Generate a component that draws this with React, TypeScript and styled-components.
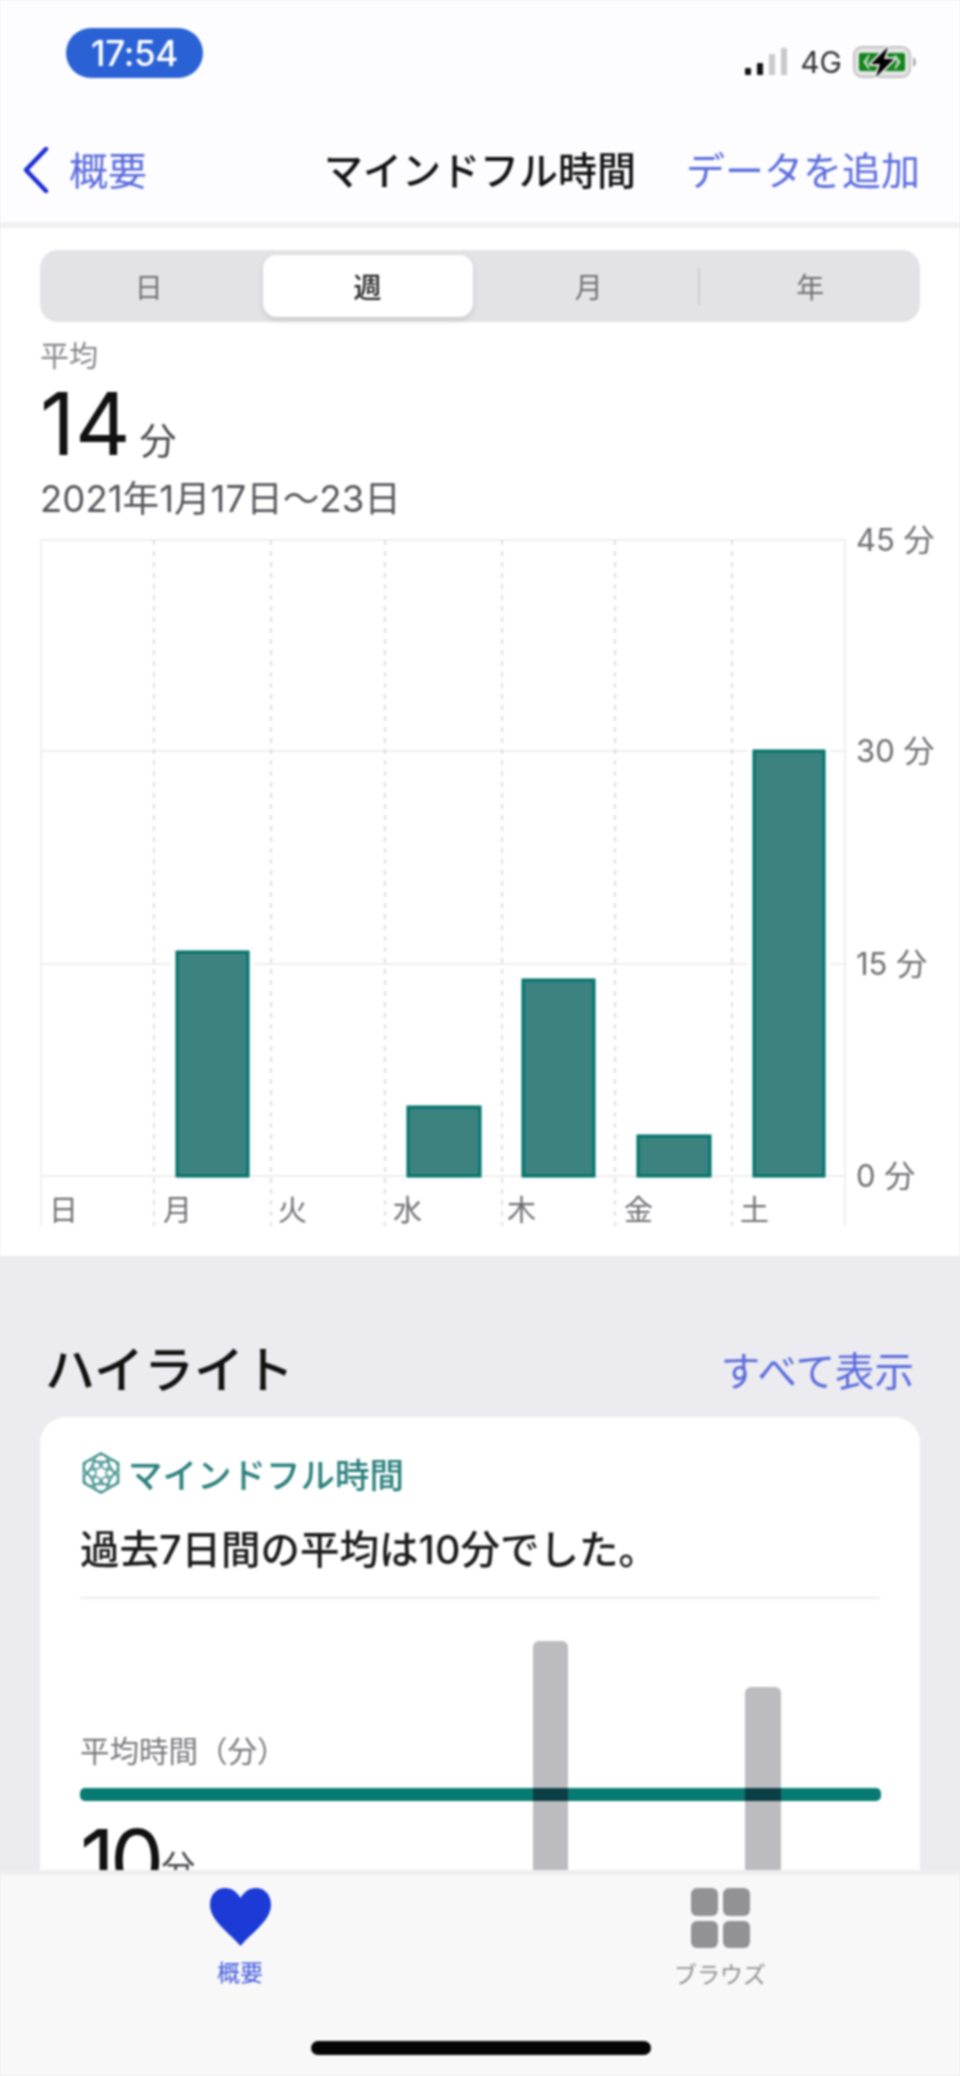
import React from "react";
import styled, { createGlobalStyle } from "styled-components";

const Global = createGlobalStyle`
  html, body { margin: 0; padding: 0; background: #ebebf0; }
  * { box-sizing: border-box; }
  body { font-family: Inter, "Noto Sans CJK JP", sans-serif; }
`;

const Page = styled.div`
  position: relative;
  width: 960px;
  height: 2076px;
  overflow: hidden;
  background: #ebebf0;
  filter: blur(0.9px);
  color: #111;
`;
const Header = styled.header`
  height: 228px;
  padding-top: 28px;
  background: #fdfdff;
  border-bottom: 6px solid #f1f1f3;
`;
const StatusRow = styled.div`
  display: flex;
  justify-content: space-between;
  padding: 0 43px 0 66px;
  height: 50px;
`;
const TimePill = styled.div`
  width: 137px;
  height: 50px;
  border-radius: 25px;
  background: #2a62d6;
  color: #fff;
  font-size: 35px;
  font-weight: 500;
  letter-spacing: -0.3px;
  display: flex;
  align-items: center;
  justify-content: center;
`;
const StatusRight = styled.div`
  display: flex;
  align-items: center;
  padding-top: 17px;
  gap: 12px;
`;
const NetLabel = styled.span`
  font-size: 30px;
  color: #333;
  margin-right: -1px;
`;
const NavBar = styled.nav`
  margin-top: 46px;
  height: 92px;
  display: grid;
  grid-template-columns: 1fr auto 1fr;
  align-items: center;
  padding: 0 40px 0 23px;
`;
const Back = styled.div`
  display: flex;
  align-items: center;
  gap: 20px;
`;
const Link = styled.span<{ $size?: number }>`
  font-size: ${(p) => p.$size ?? 39}px;
  color: #5a6bdc;
  line-height: 1;
`;
const NavTitle = styled.h1`
  margin: 0 0 0 17px;
  font-size: 39px;
  font-weight: 500;
  color: #111;
  line-height: 1;
  white-space: nowrap;
`;
const NavRight = styled.div`
  display: flex;
  justify-content: flex-end;
`;
const Main = styled.main`
  background: #fff;
  height: 1028px;
  padding-top: 22px;
`;
const Segmented = styled.div`
  margin: 0 40px;
  height: 72px;
  padding: 5px;
  border-radius: 18px;
  background: #e3e3e6;
  display: grid;
  grid-template-columns: repeat(4, 1fr);
`;
const Segment = styled.div<{ $active?: boolean; $left?: number; $right?: number }>`
  position: relative;
  display: flex;
  align-items: center;
  justify-content: center;
  width: ${(p) => (p.$active ? "210px" : "auto")};
  padding: 0 ${(p) => p.$right ?? 0}px 0 ${(p) => p.$left ?? 0}px;
  border-radius: 14px;
  font-size: 28px;
  font-weight: ${(p) => (p.$active ? 500 : 400)};
  color: ${(p) => (p.$active ? "#222" : "#6f6f73")};
  background: ${(p) => (p.$active ? "#fff" : "transparent")};
  box-shadow: ${(p) => (p.$active ? "0 3px 6px rgba(0,0,0,.12)" : "none")};
`;
const RuleCell = styled(Segment)`
  &::before {
    content: "";
    position: absolute;
    left: 0;
    top: 13px;
    bottom: 12px;
    width: 2px;
    background: #cfcfd3;
  }
`;
const Summary = styled.section`
  padding: 19px 40px 0;
`;
const SumLabel = styled.div`
  font-size: 29px;
  line-height: 32px;
  color: #85858a;
`;
const BigRow = styled.div<{ $top?: number }>`
  display: flex;
  align-items: baseline;
  gap: 9px;
  margin-top: ${(p) => p.$top ?? 0}px;
  height: 92px;
`;
const BigNum = styled.span`
  font-size: 86px;
  line-height: 92px;
  font-weight: 400;
  color: #111;
`;
const BigUnit = styled.span`
  font-size: 37px;
  color: #48484c;
`;
const DateText = styled.div`
  margin-top: 9px;
  font-size: 36.6px;
  line-height: 40px;
  color: #55555a;
  white-space: nowrap;
`;
const ChartSvg = styled.svg`
  display: block;
  width: 960px;
  height: 715px;
  margin: -4px 0 0 -40px;
  text {
    font-family: Inter, "Noto Sans CJK JP", sans-serif;
    fill: #6e6e72;
  }
`;
const HighlightHead = styled.div`
  display: flex;
  justify-content: space-between;
  align-items: flex-end;
  height: 60px;
  margin-top: 84px;
  padding: 0 46px 0 45px;
`;
const HighlightTitle = styled.h2`
  margin: 0;
  font-size: 50px;
  font-weight: 500;
  line-height: 60px;
`;
const ShowAll = styled(Link)`
  font-size: 39.5px;
  line-height: 56px;
`;
const Card = styled.article`
  position: relative;
  margin: 17px 40px 0;
  height: 600px;
  padding: 36px 40px;
  background: #fff;
  border-radius: 26px;
`;
const CardHead = styled.div`
  display: flex;
  align-items: center;
  gap: 6px;
  height: 40px;
  font-size: 34.5px;
  font-weight: 500;
  color: #2b807c;
`;
const Message = styled.p`
  margin: 32px 0 0;
  font-size: 39.5px;
  line-height: 50px;
  font-weight: 500;
  color: #1a1a1a;
  white-space: nowrap;
`;
const Rule = styled.hr`
  margin: 22px 0 0;
  border: 0;
  height: 2px;
  background: #ececef;
`;
const MetricLabel = styled.div`
  margin-top: 132px;
  font-size: 29.5px;
  line-height: 40px;
  color: #77777b;
  white-space: nowrap;
`;
const MiniRow = styled(BigRow)`
  margin-top: 44px;
  gap: 2px;
`;
const MiniNum = styled(BigNum)`
  letter-spacing: -5px;
`;
const MiniUnit = styled(BigUnit)`
  font-size: 34px;
  transform: translateY(-12px);
`;
const MiniChart = styled.svg`
  position: absolute;
  left: 0;
  top: 0;
  width: 880px;
  height: 600px;
`;
const TabBar = styled.footer`
  position: absolute;
  left: 0;
  right: 0;
  bottom: 0;
  height: 206px;
  background: #f8f8f8;
  border-top: 5px solid #eeeeef;
`;
const Tabs = styled.div`
  display: grid;
  grid-template-columns: 1fr 1fr;
  padding-top: 13px;
`;
const Tab = styled.div<{ $active?: boolean }>`
  display: flex;
  flex-direction: column;
  align-items: center;
  font-size: 23px;
  line-height: 30px;
  color: ${(p) => (p.$active ? "#4158dc" : "#8f8f92")};
`;
const TabLabel = styled.span`
  margin-top: 12px;
`;
const BrowseGrid = styled.div`
  width: 59px;
  height: 60px;
  display: grid;
  grid-template-columns: 1fr 1fr;
  grid-template-rows: 1fr 1fr;
  gap: 5px;
`;
const BrowseCell = styled.span`
  background: #929294;
  border-radius: 6px;
`;
const HomeBar = styled.div`
  width: 340px;
  height: 14px;
  margin: 51px auto 0 311px;
  border-radius: 7px;
  background: #050505;
`;

const Signal = () => (
  <svg width="44" height="28" viewBox="0 0 44 28">
    <rect x="1" y="20" width="6" height="7" rx="1" fill="#111" />
    <rect x="13" y="15" width="6" height="12" rx="1" fill="#111" />
    <rect x="25" y="6" width="6" height="21" rx="1" fill="#c9c9cb" />
    <rect x="37" y="0" width="6" height="27" rx="1" fill="#c9c9cb" />
  </svg>
);

const Battery = () => (
  <svg width="64" height="32" viewBox="0 0 64 32">
    <rect x="1" y="1" width="56" height="30" rx="8" fill="#e3e3e3" stroke="#c2c2c2" strokeWidth="2" />
    <path d="M60 11c2 1 3 3 3 5s-1 4-3 5z" fill="#a9a9a9" />
    <rect x="6" y="7" width="46" height="18" rx="2" fill="#0f8418" />
    <path d="M15 9 L10 16 L15 23 H17 L14 16 L17 9 Z" fill="#e3e3e3" opacity=".8" />
    <path d="M43 9 L48 16 L43 23 H41 L44 16 L41 9 Z" fill="#e3e3e3" opacity=".8" />
    <path d="M35 1 L18 18 H27 L23 31 L41 13 H31 Z" fill="#000" stroke="#e3e3e3" strokeWidth="4" paintOrder="stroke" strokeLinejoin="round" />
  </svg>
);

const Chevron = () => (
  <svg width="26" height="46" viewBox="0 0 26 46">
    <path d="M23 2 L3 23 L23 44" fill="none" stroke="#1f2fd4" strokeWidth="4.5" strokeLinecap="round" strokeLinejoin="round" />
  </svg>
);

const Mindful = () => (
  <svg width="42" height="42" viewBox="0 0 42 42">
    <g fill="none" stroke="#3f8f8b" strokeWidth="1.6" strokeLinejoin="round">
      <path d="M21 1 L38.5 11 V31 L21 41 L3.5 31 V11 Z" />
      <path d="M21 8 L32.5 14.5 V27.5 L21 34 L9.5 27.5 V14.5 Z" transform="rotate(30 21 21)" />
      {[0, 60, 120, 180, 240, 300].map((a) => (
        <ellipse key={a} cx="21" cy="12.5" rx="8" ry="10" transform={`rotate(${a} 21 21)`} />
      ))}
    </g>
    <circle cx="21" cy="21" r="4.5" fill="#fff" />
  </svg>
);

const Heart = () => (
  <svg width="61" height="58" viewBox="0 0 61 58">
    <path
      d="M30.5 58C21 46 0 33 0 17 0 6 7 0 15 0c7 0 12 4 15.5 10C34 4 39 0 46 0c8 0 15 6 15 17 0 16-21 29-30.5 41Z"
      fill="#1c3ad6"
    />
  </svg>
);

const vLines = [154, 271, 385, 502, 615, 732];
const hLines = [540, 751, 964, 1176];
const yLabels = [
  { y: 540, t: "45 分" },
  { y: 751, t: "30 分" },
  { y: 964, t: "15 分" },
  { y: 1176, t: "0 分" },
];
const days = [
  { x: 49, t: "日" },
  { x: 163, t: "月" },
  { x: 278, t: "火" },
  { x: 393, t: "水" },
  { x: 507, t: "木" },
  { x: 624, t: "金" },
  { x: 740, t: "土" },
];
const bars = [
  { x: 176, w: 73, top: 951 },
  { x: 407, w: 74, top: 1106 },
  { x: 522, w: 73, top: 979 },
  { x: 637, w: 74, top: 1135 },
  { x: 753, w: 72, top: 750 },
];

const WeekChart = () => (
  <ChartSvg viewBox="0 515 960 715">
    <path d="M41 540V1226M845 540V1226" stroke="#eeeef0" strokeWidth="2" />
    {hLines.map((y) => (
      <path key={y} d={`M41 ${y}H845`} stroke="#eeeef0" strokeWidth="2" />
    ))}
    {vLines.map((x) => (
      <path key={x} d={`M${x} 540V1226`} stroke="#d3d3d6" strokeWidth="1.5" strokeDasharray="5 6" />
    ))}
    {bars.map((b) => (
      <g key={b.x}>
        <rect x={b.x - 5} y={b.top - 4} width={b.w + 10} height={1172 - b.top} fill="#fff" />
        <rect x={b.x + 1} y={b.top + 1} width={b.w - 2} height={1176 - b.top - 1} fill="#3c827f" stroke="#00736b" strokeWidth="3" />
      </g>
    ))}
    {yLabels.map((l) => (
      <text key={l.t} x="856" y={l.y + 11} fontSize="31">
        {l.t}
      </text>
    ))}
    {days.map((d) => (
      <text key={d.t} x={d.x} y="1221" fontSize="29">
        {d.t}
      </text>
    ))}
  </ChartSvg>
);

const HighlightChart = () => (
  <MiniChart viewBox="0 0 880 600">
    <rect x="493" y="224" width="35" height="300" rx="6" fill="#bcbcc0" />
    <rect x="705" y="270" width="36" height="300" rx="6" fill="#bcbcc0" />
    <rect x="40" y="371" width="801" height="13" rx="5" fill="#077a72" />
    <rect x="493" y="371" width="35" height="13" fill="#0c3f45" />
    <rect x="705" y="371" width="36" height="13" fill="#0c3f45" />
  </MiniChart>
);

export default function App() {
  return (
    <Page>
      <Global />
      <Header>
        <StatusRow>
          <TimePill>17:54</TimePill>
          <StatusRight>
            <Signal />
            <NetLabel>4G</NetLabel>
            <Battery />
          </StatusRight>
        </StatusRow>
        <NavBar>
          <Back>
            <Chevron />
            <Link>概要</Link>
          </Back>
          <NavTitle>マインドフル時間</NavTitle>
          <NavRight>
            <Link>データを追加</Link>
          </NavRight>
        </NavBar>
      </Header>
      <Main>
        <Segmented>
          <Segment $right={10}>日</Segment>
          <Segment $active>週</Segment>
          <Segment>月</Segment>
          <RuleCell $left={8}>年</RuleCell>
        </Segmented>
        <Summary>
          <SumLabel>平均</SumLabel>
          <BigRow $top={5}>
            <BigNum>14</BigNum>
            <BigUnit>分</BigUnit>
          </BigRow>
          <DateText>2021年1月17日～23日</DateText>
          <WeekChart />
        </Summary>
      </Main>
      <HighlightHead>
        <HighlightTitle>ハイライト</HighlightTitle>
        <ShowAll>すべて表示</ShowAll>
      </HighlightHead>
      <Card>
        <HighlightChart />
        <CardHead>
          <Mindful />
          マインドフル時間
        </CardHead>
        <Message>過去7日間の平均は10分でした。</Message>
        <Rule />
        <MetricLabel>平均時間（分）</MetricLabel>
        <MiniRow>
          <MiniNum>10</MiniNum>
          <MiniUnit>分</MiniUnit>
        </MiniRow>
      </Card>
      <TabBar>
        <Tabs>
          <Tab $active>
            <Heart />
            <TabLabel>概要</TabLabel>
          </Tab>
          <Tab>
            <BrowseGrid>
              <BrowseCell />
              <BrowseCell />
              <BrowseCell />
              <BrowseCell />
            </BrowseGrid>
            <TabLabel>ブラウズ</TabLabel>
          </Tab>
        </Tabs>
        <HomeBar />
      </TabBar>
    </Page>
  );
}
